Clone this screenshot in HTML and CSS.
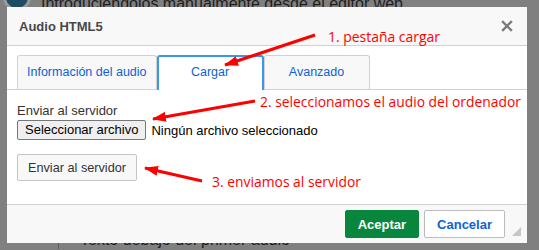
FILE: index.html
```html
<!DOCTYPE html>
<html lang="es">
<head>
    <meta charset="UTF-8">
    <meta name="viewport" content="width=device-width, initial-scale=1.0">
    <title>Audio HTML5</title>
    <link rel="stylesheet" href="styles.css">
</head>
<body>
    <div class="page">
        <div class="page-title"><span class="page-dot"></span>Introduciéndolos manualmente desde el editor web</div>
        <div class="page-body">Texto debajo del primer audio</div>
    </div>

    <div class="dialog">
        <div class="dialog-head">
            <span class="dialog-title">Audio HTML5</span>
            <svg class="dialog-close" width="12" height="12" viewBox="0 0 12 12">
                <path d="M2 2 L10 10 M10 2 L2 10" stroke="#7b7b7b" stroke-width="2.4" stroke-linecap="square"/>
            </svg>
        </div>
        <div class="dialog-body">
            <div class="tabs">
                <span class="tab">Información del audio</span>
                <span class="tab tab-active">Cargar</span>
                <span class="tab">Avanzado</span>
            </div>
            <div class="panel">
                <div class="field-label">Enviar al servidor</div>
                <div class="file-row">
                    <span class="file-btn">Seleccionar archivo</span>
                    <span class="file-name">Ningún archivo seleccionado</span>
                </div>
                <button class="send-btn">Enviar al servidor</button>
            </div>
        </div>
        <div class="dialog-foot">
            <button class="btn btn-ok">Aceptar</button>
            <button class="btn btn-cancel">Cancelar</button>
            <span class="resizer"></span>
        </div>
    </div>

    <!-- red annotations drawn on top of the screenshot -->
    <svg class="notes" width="539" height="250" viewBox="0 0 539 250">
        <defs>
            <marker id="head" markerUnits="userSpaceOnUse" markerWidth="14" markerHeight="10" refX="13" refY="5" orient="auto">
                <path d="M0 0 L14 5 L0 10 Z" fill="#f00"/>
            </marker>
        </defs>
        <line x1="315" y1="35" x2="225" y2="65" stroke="#f00" stroke-width="3" marker-end="url(#head)"/>
        <line x1="255" y1="101" x2="153" y2="119" stroke="#f00" stroke-width="3" marker-end="url(#head)"/>
        <line x1="202" y1="181" x2="145" y2="168" stroke="#f00" stroke-width="3" marker-end="url(#head)"/>
        <text class="note" x="328" y="42" textLength="112" lengthAdjust="spacingAndGlyphs">1. pestaña cargar</text>
        <text class="note" x="260" y="107" textLength="261" lengthAdjust="spacingAndGlyphs">2. seleccionamos el audio del ordenador</text>
        <text class="note" x="212" y="187" textLength="149" lengthAdjust="spacingAndGlyphs">3. enviamos al servidor</text>
    </svg>
</body>
</html>
```

FILE: styles.css
```css
body {
    margin: 0;
    height: 250px;
    overflow: hidden;
    background-color: #808080;
    font-family: Arial, "Liberation Sans", sans-serif;
}
.page-title {
    display: flex;
    align-items: center;
    gap: 10px;
    height: 28px;
    margin-top: -10px;
    padding-left: 3px;
    font-size: 16px;
    color: #1e1e1e;
}
.page-dot {
    width: 22px;
    height: 22px;
    margin-top: -14px;
    border-radius: 50%;
    background-color: #1d4d63;
    border: 3px solid #9a9a9a;
}
.page-body {
    margin: 170px 0 0 58px;
    padding: 43px 0 0 21px;
    border-left: 1px solid #5e5e5e;
    font-size: 16px;
    line-height: 18px;
    color: #1e1e1e;
}
.dialog {
    position: absolute;
    left: 7px;
    top: 7px;
    width: 520px;
    height: 236px;
    display: flex;
    flex-direction: column;
    background-color: #fff;
}
.dialog-head {
    display: flex;
    align-items: center;
    justify-content: space-between;
    height: 38px;
    padding: 0 14px 0 12px;
    background-color: #f8f8f8;
    border-bottom: 1px solid #d1d1d1;
}
.dialog-title {
    font-size: 13px;
    font-weight: bold;
    color: #484848;
}
.dialog-body {
    flex: 1;
}
.tabs {
    display: flex;
    align-items: flex-end;
    margin-top: 9px;
    padding-left: 10px;
    border-bottom: 1px solid #d1d1d1;
}
.tab {
    box-sizing: border-box;
    min-width: 106px;
    height: 34px;
    padding: 0 9px;
    line-height: 32px;
    text-align: center;
    font-size: 12.5px;
    color: #0b63d6;
    background-color: #f8f8f8;
    border: 1px solid #d1d1d1;
    border-bottom: none;
    border-radius: 3px 3px 0 0;
}
.tab-active {
    height: 35px;
    margin-bottom: -1px;
    line-height: 31px;
    min-width: 107px;
    background-color: #fff;
    border: 2px solid #3b97eb;
    border-bottom: none;
}
.panel {
    padding: 13px 10px 0;
}
.field-label {
    font-size: 13px;
    line-height: 15px;
    color: #333;
}
.file-row {
    display: flex;
    align-items: center;
    margin-top: 2px;
}
.file-btn {
    box-sizing: border-box;
    height: 20px;
    padding: 0 7px;
    line-height: 18px;
    font-size: 13px;
    color: #000;
    background-color: #efefef;
    border: 1px solid #767676;
    border-radius: 2px;
}
.file-name {
    margin-left: 5px;
    font-size: 13px;
    color: #000;
}
.send-btn {
    display: block;
    height: 27px;
    margin-top: 14px;
    padding: 0 10px;
    font-family: inherit;
    font-size: 12.7px;
    color: #333;
    background-color: #f8f8f8;
    border: 1px solid #c4c4c4;
    border-radius: 2px;
}
.dialog-foot {
    position: relative;
    display: flex;
    align-items: center;
    justify-content: flex-end;
    gap: 5px;
    height: 38px;
    padding-right: 22px;
    background-color: #f8f8f8;
    border-top: 1px solid #d1d1d1;
}
.btn {
    height: 28px;
    font-family: inherit;
    font-size: 13px;
    font-weight: bold;
    border-radius: 2px;
}
.btn-ok {
    padding: 0 12px;
    color: #fff;
    background-color: #09863e;
    border: 1px solid #09863e;
}
.btn-cancel {
    padding: 0 12px;
    color: #0b63d6;
    background-color: #fff;
    border: 1px solid #bcbcbc;
}
.resizer {
    position: absolute;
    right: 6px;
    bottom: 7px;
    width: 0;
    height: 0;
    border-left: 9px solid transparent;
    border-bottom: 9px solid #c6c6c6;
}
.notes {
    position: absolute;
    top: 0;
    left: 0;
    pointer-events: none;
}
.note {
    font-family: "Open Sans", sans-serif;
    font-size: 14px;
    fill: #f00;
}
```
